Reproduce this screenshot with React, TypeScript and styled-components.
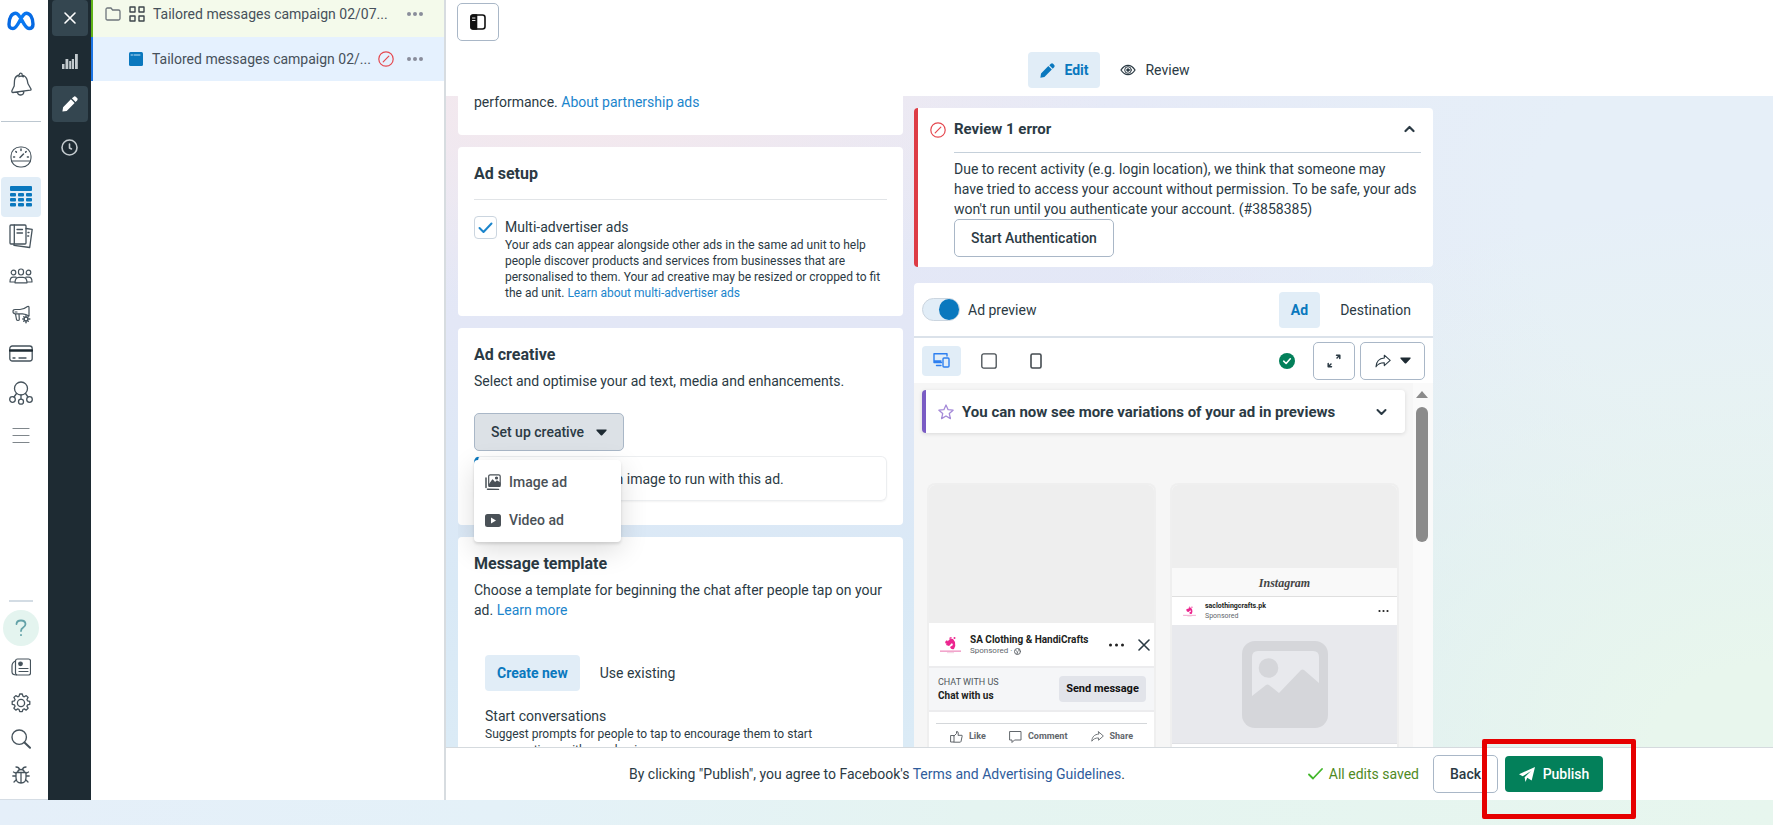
import React from 'react';
import styled, { createGlobalStyle, css } from 'styled-components';

const ink = '#2b3a44';
const blue = '#0a78be';
const line = '#cbd5df';

const Global = createGlobalStyle`
  *, *::before, *::after { box-sizing: border-box; }
  body { margin: 0; background: linear-gradient(to right, #e5eff9 0%, #e4f1f8 28%, #e5f4f1 55%, #e7f6ee 100%); }
  body, button, input { font-family: Roboto, "Noto Sans", sans-serif; font-size: 14px; line-height: 20px; color: ${ink}; }
  button { padding: 0; border: 0; background: none; cursor: pointer; }
  h2, h3, p, ul { margin: 0; padding: 0; }
  a { text-decoration: none; }
  svg { display: block; flex: none; }
`;

const Page = styled.div`
  height: 100vh;
  padding-bottom: 25px;
  display: flex;
  overflow: hidden;
`;

/* Left rail */
const Rail = styled.nav`
  width: 48px;
  flex: none;
  display: flex;
  flex-direction: column;
  background: #fff;
  padding: 0 7px 6px 1px;
  border-bottom: 1px solid #d5dde5;
`;
const RailTop = styled.div`
  display: flex;
  flex-direction: column;
  gap: 20px;
`;
const RailItem = styled.a<{ $h?: number; $active?: boolean }>`
  height: ${p => p.$h ?? 39}px;
  flex: none;
  display: flex;
  align-items: center;
  justify-content: center;
  border-radius: 4px;
  color: ${p => (p.$active ? blue : '#46535c')};
  background: ${p => (p.$active ? '#e1edf7' : 'transparent')};
`;
const RailRule = styled.hr`
  width: 100%;
  flex: none;
  height: 1px;
  border: 0;
  margin: 15px 0;
  background: #bcc7d0;
`;
const ShortRule = styled(RailRule)`
  width: 24px;
  height: 2px;
  margin: auto auto 8px;
  background: #d3dce4;
`;
const Help = styled.a`
  width: 36px;
  height: 36px;
  flex: none;
  margin: 0 auto 3px;
  border-radius: 50%;
  background: #e4f4ef;
  color: #64a2a8;
  display: flex;
  align-items: center;
  justify-content: center;
`;

/* Dark tool strip */
const Strip = styled.div`
  width: 43px;
  flex: none;
  background: #1e2b33;
  display: flex;
  flex-direction: column;
  align-items: center;
  gap: 7px;
`;
const StripButton = styled.button<{ $on?: boolean }>`
  width: 36px;
  height: 36px;
  flex: none;
  display: grid;
  place-items: center;
  border-radius: 4px;
  color: ${p => (p.$on ? '#fff' : '#c3cace')};
  background: ${p => (p.$on ? '#344650' : 'transparent')};
`;

/* Campaign tree */
const Tree = styled.aside`
  width: 355px;
  flex: none;
  background: #fff;
  border-right: 2px solid #d7dce0;
`;
const TreeRow = styled.div<{ $tone: 'green' | 'blue' }>`
  display: flex;
  align-items: center;
  gap: 8px;
  padding: 0 21px 0 12px;
  border-left: 2px solid ${p => (p.$tone === 'green' ? '#5fb319' : '#1b74e4')};
  background: ${p => (p.$tone === 'green' ? '#f4faeb' : '#e5f1fe')};
  ${p => (p.$tone === 'green'
    ? css`height: 37px; padding-bottom: 10px;`
    : css`height: 44px; padding-left: 35px;`)}
`;
const TreeName = styled.span`
  flex: 1;
  min-width: 0;
  white-space: nowrap;
  color: #46505a;
`;
const TreeStatus = styled.span`
  margin-right: 5px;
  color: #e5484f;
`;
const IconButton = styled.button`
  display: grid;
  place-items: center;
`;

/* Editor */
const Main = styled.main`
  flex: 1;
  min-width: 0;
  display: flex;
  flex-direction: column;
`;
const Header = styled.header`
  height: 96px;
  flex: none;
  background: #fff;
  padding: 3px 0 0 11px;
`;
const OutlineButton = styled.button<{ $w?: number }>`
  height: 38px;
  ${p => (p.$w ? `width: ${p.$w}px;` : 'padding: 0 16px;')}
  display: inline-flex;
  align-items: center;
  justify-content: center;
  gap: 9px;
  border: 1px solid #a9b7c7;
  border-radius: 5px;
  background: #fff;
  font-weight: 500;
`;
const Tabs = styled.div`
  display: flex;
  align-items: center;
  gap: 8px;
`;
const HeaderTabs = styled(Tabs)`
  justify-content: center;
  margin-top: 11px;
`;
const Tab = styled.button<{ $on?: boolean }>`
  height: 36px;
  padding: 0 12px;
  display: flex;
  align-items: center;
  gap: 9px;
  border-radius: 4px;
  ${p => p.$on && css`background: #e1edf7; color: ${blue}; font-weight: 700;`}
`;
const Body = styled.div`
  flex: 1;
  min-height: 0;
  overflow: hidden;
  padding-left: 12px;
  display: grid;
  grid-template-columns: minmax(0, 445px) minmax(0, 519px);
  grid-template-rows: minmax(0, 1fr);
  gap: 11px;
  background:
    radial-gradient(ellipse 40% 32% at 10% 0%, #f6e8ec 0%, rgba(246, 232, 236, 0) 100%),
    radial-gradient(ellipse 60% 85% at 100% 100%, #e8f6ed 15%, rgba(232, 246, 237, 0) 100%),
    radial-gradient(ellipse 45% 90% at 95% 20%, #e6eff8 30%, rgba(230, 239, 248, 0) 100%),
    linear-gradient(to bottom, #e6eaf7 0%, #e3e7f6 35%, #d9e9f6 75%, #dbebf6 100%);
`;
const Form = styled.div`
  overflow: hidden;
`;
const FormScroll = styled.div`
  margin-top: -20px;
  display: flex;
  flex-direction: column;
  gap: 12px;
`;
const Card = styled.section<{ $bottom?: number }>`
  background: #fff;
  border-radius: 4px;
  padding: 16px 16px ${p => p.$bottom ?? 16}px;
`;
const Title = styled.h2`
  font-size: 16px;
  line-height: 22px;
  font-weight: 700;
`;
const Text = styled.p`
  margin-top: 5px;
`;
const Small = styled.p`
  font-size: 12px;
  line-height: 16px;
`;
const Link = styled.a<{ $dark?: boolean }>`
  color: ${p => (p.$dark ? '#2f5c9c' : '#1b85cc')};
`;
const Rule = styled.hr<{ $dark?: boolean }>`
  border: 0;
  height: 1px;
  margin: 0;
  background: ${p => (p.$dark ? '#c5d0da' : '#e1e4e7')};
`;
const CardRule = styled(Rule)`
  margin: 14px 0 16px;
`;
const CheckRow = styled.div`
  display: flex;
  gap: 8px;
`;
const CheckWrap = styled.span`
  position: relative;
  width: 23px;
  height: 23px;
  flex: none;
  color: #1b85cc;
  svg { position: absolute; inset: 0; pointer-events: none; }
`;
const Check = styled.input`
  appearance: none;
  width: 23px;
  height: 23px;
  margin: 0;
  border: 1px solid ${line};
  border-radius: 4px;
  background: #fff;
`;
const CheckText = styled.div`
  padding-top: 1px;
`;
const Picker = styled.div`
  position: relative;
  display: inline-block;
  vertical-align: top;
  margin: 22px 0 5px;
`;
const PickerButton = styled(OutlineButton)`
  background: #dce1e6;
  gap: 12px;
`;
const Menu = styled.ul`
  position: absolute;
  z-index: 2;
  top: 47px;
  left: 0;
  width: 147px;
  padding: 3px 0;
  list-style: none;
  background: #fff;
  border-radius: 4px;
  box-shadow: 0 2px 3px rgba(0, 0, 0, 0.12), 0 8px 28px rgba(0, 0, 0, 0.14);
`;
const MenuItem = styled.button`
  width: 100%;
  height: 38px;
  padding-left: 11px;
  display: flex;
  align-items: center;
  gap: 8px;
  color: #4a5157;
  font-weight: 500;
`;
const Tip = styled.div`
  height: 45px;
  display: flex;
  align-items: center;
  padding-left: 130px;
  border: 1px solid #eceef0;
  border-left: 4px solid ${blue};
  border-radius: 6px;
  box-shadow: 0 1px 2px rgba(0, 0, 0, 0.05);
`;
const Inset = styled.div`
  margin-top: 35px;
  padding-left: 11px;
`;
const Subhead = styled.h3`
  font-size: 14px;
  line-height: 20px;
  font-weight: 400;
  margin-top: 15px;
`;

/* Right column */
const Side = styled.div`
  min-height: 0;
  padding-top: 12px;
  display: flex;
  flex-direction: column;
  gap: 16px;
`;
const ErrorCard = styled.section`
  flex: none;
  padding: 10px 12px;
  background: #fff;
  border-left: 4px solid #dd3c45;
  border-radius: 4px;
  display: grid;
  grid-template-columns: 16px minmax(0, 1fr);
  column-gap: 8px;
`;
const ErrorHead = styled.div`
  display: flex;
  align-items: center;
  justify-content: space-between;
  padding-right: 6px;
  height: 22px;
  margin-bottom: 12px;
`;
const Strong = styled.h2`
  font-size: 15px;
  line-height: 20px;
  font-weight: 700;
  white-space: nowrap;
`;
const ErrorIcon = styled.span`
  padding-top: 4px;
  color: #e5484f;
`;
const ErrorText = styled.p`
  margin-top: 6px;
`;
const Preview = styled.section`
  flex: 1;
  min-height: 0;
  display: flex;
  flex-direction: column;
  overflow: hidden;
  border-radius: 4px 4px 0 0;
  background: #fff;
`;
const Bar = styled.div<{ $h: number; $rule?: boolean }>`
  height: ${p => p.$h}px;
  flex: none;
  display: flex;
  align-items: center;
  justify-content: space-between;
  padding: 0 8px;
  ${p => p.$rule && css`padding-right: 10px; border-bottom: 2px solid #dbe2ea;`}
`;
const Group = styled.div<{ $gap: number }>`
  display: flex;
  align-items: center;
  gap: ${p => p.$gap}px;
`;
const Switch = styled.input`
  appearance: none;
  width: 38px;
  height: 23px;
  margin: 0;
  border: 1px solid ${line};
  border-radius: 12px;
  background: #e1edf7;
  &::before {
    content: '';
    display: block;
    width: 20px;
    height: 21px;
    margin-left: 16px;
    border-radius: 50%;
    background: ${blue};
  }
`;
const Device = styled.button<{ $on?: boolean }>`
  width: 39px;
  height: 30px;
  display: grid;
  place-items: center;
  border-radius: 4px;
  color: ${p => (p.$on ? '#2d7ff0' : '#444b50')};
  background: ${p => (p.$on ? '#e1edf7' : 'transparent')};
`;
const Stage = styled.div`
  flex: 1;
  min-height: 0;
  display: flex;
  background: #f6f6f6;
`;
const StageBody = styled.div`
  flex: 1;
  min-width: 0;
  display: flex;
  flex-direction: column;
  padding: 7px 8px 0;
`;
const Banner = styled.div`
  height: 43px;
  flex: none;
  padding: 0 18px 0 12px;
  display: flex;
  align-items: center;
  gap: 8px;
  background: #fff;
  border-left: 4px solid #7a5cc4;
  border-radius: 4px;
  box-shadow: 0 1px 4px rgba(0, 0, 0, 0.12);
  ${Strong} { flex: 1; }
`;
const Phones = styled.div`
  flex: 1;
  min-height: 0;
  margin: 50px 6px 0 5px;
  display: grid;
  grid-template-columns: 1fr 1fr;
  gap: 14px;
  overflow: hidden;
`;
const Phone = styled.article`
  display: flex;
  flex-direction: column;
  min-width: 0;
  border: 2px solid #efefef;
  border-bottom: 0;
  border-radius: 8px 8px 0 0;
  background: #fff;
  overflow: hidden;
  color: #1c1e21;
`;
const Blank = styled.div<{ $h: number }>`
  height: ${p => p.$h}px;
  flex: none;
  background: #eee;
`;
const PostHead = styled.div<{ $h: number }>`
  height: ${p => p.$h}px;
  flex: none;
  display: flex;
  align-items: center;
  gap: 9px;
  padding: 0 1px 0 11px;
`;
const PostName = styled.div<{ $s: number }>`
  flex: 1;
  min-width: 0;
  white-space: nowrap;
  font-size: ${p => p.$s}px;
  line-height: ${p => p.$s + 3}px;
  font-weight: 700;
  small {
    display: flex;
    align-items: center;
    gap: 2px;
    font-size: ${p => (p.$s > 8 ? 8 : 7)}px;
    line-height: 10px;
    font-weight: 400;
    color: #62676c;
  }
`;
const Cta = styled.div`
  height: 46px;
  flex: none;
  display: flex;
  align-items: center;
  justify-content: space-between;
  padding: 0 8px 0 9px;
  background: #f5f6f8;
  border: solid #ececee;
  border-width: 2px 0;
`;
const CtaText = styled.div`
  font-size: 10px;
  line-height: 13px;
  font-weight: 700;
  small { display: block; font-size: 9px; font-weight: 400; color: #50565b; }
`;
const CtaButton = styled.button`
  width: 87px;
  height: 26px;
  border-radius: 4px;
  background: #e2e4ea;
  color: #111;
  font-size: 11px;
  line-height: 14px;
  font-weight: 700;
`;
const Actions = styled.div`
  margin: 11px 7px 0;
  padding: 5px 14px 0;
  border-top: 1px solid #d4d7da;
  display: flex;
  justify-content: space-between;
`;
const Action = styled.button`
  display: flex;
  align-items: center;
  gap: 6px;
  font-size: 9px;
  line-height: 14px;
  font-weight: 700;
  color: #62676c;
`;
const InstaHead = styled.div`
  height: 29px;
  flex: none;
  background: #f9f9f9;
  border-bottom: 1px solid #dfdfdf;
  text-align: center;
  font: italic bold 12px/30px "Liberation Serif", serif;
  color: #444;
`;
const Media = styled.div`
  height: 119px;
  flex: none;
  background: #e8e9ed;
  display: flex;
  justify-content: center;
  padding-top: 16px;
  border-bottom: 1px solid #dfe0e4;
`;
const Scroll = styled.div`
  width: 20px;
  flex: none;
  padding: 8px 4px 0 3px;
  background: #fafafa;
`;
const Thumb = styled.div`
  width: 12px;
  height: 135px;
  margin-top: 9px;
  border-radius: 6px;
  background: #8b8b8b;
`;

/* Footer */
const Footer = styled.footer`
  height: 53px;
  flex: none;
  display: flex;
  align-items: center;
  justify-content: space-between;
  padding: 0 170px 0 183px;
  background: #fff;
  border-top: 1px solid #d5dade;
  white-space: nowrap;
`;
const Saved = styled.span`
  display: flex;
  align-items: center;
  gap: 6px;
  margin-right: 7px;
  color: #4f8a1f;
`;
const PublishWrap = styled.div`
  position: relative;
`;
const Publish = styled.button`
  height: 36px;
  width: 98px;
  display: flex;
  align-items: center;
  justify-content: center;
  gap: 8px;
  border-radius: 4px;
  background: #03805a;
  color: #fff;
  font-weight: 500;
`;
const Marker = styled.span`
  position: absolute;
  z-index: 3;
  inset: -17px -33px -27px -23px;
  border: 5px solid #e60000;
  border-radius: 2px;
  pointer-events: none;
`;

/* Icons */
type IconProps = { w?: number; h?: number; vb?: string; sw?: number; fill?: string; children: React.ReactNode };
const Icon = ({ w = 16, h, vb, sw = 1.2, fill = 'none', children }: IconProps) => (
  <svg width={w} height={h ?? w} viewBox={vb ?? `0 0 ${w} ${h ?? w}`} fill={fill} stroke={sw ? 'currentColor' : 'none'}
    strokeWidth={sw} strokeLinecap="round" strokeLinejoin="round" aria-hidden="true">{children}</svg>
);
const Dots = ({ w = 16, r = 2, c = '#8a8d9b' }) => (
  <Icon w={w} h={6} sw={0}><g fill={c}><circle cx={r} cy="3" r={r} /><circle cx={w / 2} cy="3" r={r} /><circle cx={w - r} cy="3" r={r} /></g></Icon>
);
const Pencil = ({ w = 16 }) => (
  <Icon w={w} vb="0 0 16 16" sw={0}><path fill="currentColor" d="M.4 15.600 1.100 11.200 8.900 3.300l3.700 3.700L4.700 14.900zM9.900 2.300 11.600.9a1.800 1.800 0 0 1 2.400 0l1.100 1.100a1.800 1.800 0 0 1 0 2.400L13.600 6z" /></Icon>
);
const Banned = () => (
  <Icon w={16}><circle cx="8" cy="8" r="7.2" /><path d="m5.2 10.8 5.6-5.6" /></Icon>
);
const Caret = () => <Icon w={11} h={7} sw={0}><path fill="#1e2b33" d="M.6.6h9.8q.5.6 0 1.1L6.2 6.2q-.7.6-1.4 0L.6 1.7Q.1 1 .6.6" /></Icon>;
const Arrow = ({ w = 16 }) => (
  <Icon w={w} vb="0 0 16 16" sw={1.1}><path d="M9.3 2.2 15.2 7.4 9.3 12.6V9.8C5.4 9.7 3 11 1 13.8 1.3 8.600 4 5.400 9.300 5z" /></Icon>
);
const Brand = ({ w = 21 }) => (
  <Icon w={w} vb="0 0 21 18" h={Math.round(w * 18 / 21)} sw={0}>
    <path fill="#ec268f" d="M8 5q2-3 5-2l2 3q1 4-1 7-3 1-4-2l3-2-1-2-3 3-3-1zM5 6l2-2 1 2-2 2zM9 2l2-1 1 1-2 1z" />
    <circle cx="14.5" cy="2" r="1" fill="#ec268f" /><rect y="14.5" width="21" height="1.3" fill="#ef8fc0" /><rect x="7" y="16.5" width="7" height=".6" fill="#e9b8cf" />
  </Icon>
);
const Meta = () => (
  <svg width="28" height="20" viewBox="0 0 28 20" fill="none" aria-hidden="true">
    <defs><linearGradient id="meta" x1="0" x2="1"><stop stopColor="#0668e1" /><stop offset=".5" stopColor="#0a7cf5" /><stop offset="1" stopColor="#0668e1" /></linearGradient></defs>
    <path stroke="url(#meta)" strokeWidth="3.4" d="M2 13.2C2 6.5 5 2.2 8.7 2.2c5.3 0 7.6 15.3 13.3 15.3 2.8 0 4-1.8 4-4.3C26 6.500 22.900 2.200 19.200 2.200 14 2.200 11.500 17.500 6 17.500c-2.800 0-4-1.800-4-4.300z" />
  </svg>
);

export default function App() {
  return (
    <>
      <Global />
      <Page>
        <Rail aria-label="Meta tools">
          <RailTop>
            <RailItem $h={42} href="#home" aria-label="Meta"><Meta /></RailItem>
            <RailItem $h={44} href="#notifications" aria-label="Notifications">
              <Icon w={22} h={24} sw={1.3}><path d="M2 18.500 4.200 14l.3-5.500Q5 4 9.200 3q.3-2 1.700-1.900t1.300 2q4 1 5 5l.8 3.700 3 5.200q.3 1-.8 1.200L3 20.500Q1.400 20.300 2 18.500zM7.500 20.200q.3 3 3.400 2.800 2.800-.3 3-3.500M8.800 4.800Q11 3.600 13.400 4.800" /></Icon>
            </RailItem>
          </RailTop>
          <RailRule />
          <RailItem $h={40} href="#overview" aria-label="Account overview">
            <Icon w={22} sw={1.1}><rect x="1" y="1" width="20" height="20" rx="9" /><path d="M1.600 15h18.800" /><path d="M10 11.500 13.500 8M11 3v1.500M5.800 5.500l.6.600M16.200 5.500l-.6.600M3.600 11h1M17.400 11h1" strokeWidth="1.5" /></Icon>
          </RailItem>
          <RailItem $h={40} $active href="#campaigns" aria-label="Campaigns">
            <Icon w={22} sw={0}><g fill="currentColor"><rect width="22" height="5" rx="1" />{[7, 12, 17].map(y => [0, 8, 16].map(x => <rect key={`${x}-${y}`} x={x} y={y} width="6" height="3.4" rx="1" />))}</g></Icon>
          </RailItem>
          <RailItem href="#reporting" aria-label="Ads reporting">
            <Icon w={24} h={25} sw={1.3}><rect x="1" y="1" width="16" height="19" rx="1" /><path d="M5.300 1v19M8 5.500h5.500M8 9h5.500M17 4.500l6.200.8-2.500 18.200L5 21.400V20M19 8.500h1M18.700 12h1" /></Icon>
          </RailItem>
          <RailItem href="#audiences" aria-label="Audiences">
            <Icon w={24} h={16} sw={1.2}><rect x="9.5" y="1" width="5" height="6" rx="2.4" /><circle cx="4.5" cy="4.5" r="2.3" /><circle cx="19.5" cy="4.5" r="2.3" /><path d="M6 14.800c0-3.500 1.500-5.500 4-5.500h4c2.500 0 4 2 4 5.500zM6 14H1c0-3 1-4.800 3.200-4.800H7M18 14h5c0-3-1-4.800-3.200-4.800H17" /></Icon>
          </RailItem>
          <RailItem href="#ads-settings" aria-label="Advertising settings">
            <Icon w={19} h={19} sw={1.2}><path d="M3 4.500h5Q12 4.300 15.500 1.500 17 1 17 2.500V11q-3-2-6.500-2.200H3Q1 8.700 1 6.600T3 4.500zM3.500 9l1 5.500q.3 1 1.500 1t1.300-1L7 9M3 7h2" /><circle cx="14" cy="14" r="1.8" /><path d="M14 10.700v1M14 16.300v1.500M10.800 14h1M16.300 14h1.500M11.800 11.800l.7.700M16.200 11.800l-.7.700M11.800 16.200l.7-.7M16.200 16.200l-.7-.7" strokeWidth="1.5" /></Icon>
          </RailItem>
          <RailItem href="#billing" aria-label="Billing">
            <Icon w={24} h={17} sw={1.3}><rect x=".8" y="1" width="22.4" height="15" rx="2.5" /><path d="M1 5.500h22" strokeWidth="2.4" stroke="#1e2b33" /><path d="M4 13h2M10 13h7" /></Icon>
          </RailItem>
          <RailItem href="#events" aria-label="Events manager">
            <Icon w={24} h={24} sw={1.3}><circle cx="12" cy="7.5" r="6.5" /><circle cx="3.5" cy="18.5" r="2.8" /><circle cx="12" cy="20.7" r="2.5" /><circle cx="20.5" cy="18.5" r="2.8" /><path d="M12 14v4M7.500 12.500 5 16M16.500 12.500 19 16" /></Icon>
          </RailItem>
          <RailItem $h={47} href="#all-tools" aria-label="All tools">
            <Icon w={18} h={17} sw={1.2}><path d="M1 1.500h16M1 8.500h16M1 15.500h16" stroke="#7f868b" /></Icon>
          </RailItem>
          <ShortRule />
          <Help href="#help" aria-label="Help"><Icon w={12} h={18} sw={1.8}><path d="M1.500 5Q1.700 1.500 6 1.500T10.500 5q0 2-2.300 3.400Q6 9.700 6 12M6 15.800v.4" /></Icon></Help>
          <RailItem $h={36} href="#news" aria-label="News">
            <Icon w={20} h={18} sw={1.2}><rect x="4.5" y="1" width="15" height="16" rx="2" /><path d="M4.500 3Q1 4.500 1 8v6q0 3 4.500 3" /><circle cx="9.5" cy="5.8" r="1.8" fill="currentColor" /><path d="M8 10.500h9M8 13.500h9" /></Icon>
          </RailItem>
          <RailItem $h={36} href="#settings" aria-label="Settings">
            <Icon w={20} sw={1.3}><circle cx="10" cy="10" r="3.6" /><path d="M8.700 1h2.600l.6 2.200 1.300.6 2-1.200 1.900 1.900-1.200 2 .6 1.300 2.300.6v2.900l-2.300.6-.6 1.300 1.200 2-1.900 1.900-2-1.200-1.300.6-.6 2.200H8.700l-.6-2.200-1.300-.6-2 1.200-1.900-1.900 1.200-2-.6-1.300L1.200 11.300V8.400l2.300-.6.6-1.300-1.200-2 1.900-1.900 2 1.200 1.300-.6z" /></Icon>
          </RailItem>
          <RailItem $h={36} href="#search" aria-label="Search">
            <Icon w={20} sw={1.4}><circle cx="8.2" cy="8.2" r="7.2" /><path d="m13.500 13.500 5.500 5.300" strokeWidth="2" /></Icon>
          </RailItem>
          <RailItem $h={36} href="#report" aria-label="Report a problem">
            <Icon w={18} sw={1.3}><path d="M4 6.500h10v5q0 5.500-5 5.500t-5-5.500zM9 6.500V17M5.500 6.300Q6 3.500 9 3.500t3.500 2.800M4 1q3 0 3.500 2.500M14 1q-3 0-3.500 2.500M4 10H.8M14 10h3.200M4.200 7.500 1.500 6M13.800 7.500 16.500 6M4.500 13.500 2 16M13.500 13.500 16 16" /></Icon>
          </RailItem>
        </Rail>

        <Strip>
          <StripButton $on aria-label="Close"><Icon w={14} sw={1.6}><path d="m2 2 10 10M12 2 2 12" /></Icon></StripButton>
          <StripButton aria-label="Charts"><Icon w={16} h={15} sw={0}><g fill="currentColor"><rect y="10" width="2.5" height="5" /><rect x="3.5" y="5" width="2.8" height="10" /><rect x="7.2" y="7" width="2" height="8" /><rect x="9.8" y="5" width="2.2" height="10" /><rect x="13" width="2.8" height="15" /></g></Icon></StripButton>
          <StripButton $on aria-label="Edit"><Pencil /></StripButton>
          <StripButton aria-label="History"><Icon w={17} sw={1.6}><circle cx="8.5" cy="8.5" r="7.5" /><path d="M8.500 5v4l2 1" /></Icon></StripButton>
        </Strip>

        <Tree aria-label="Campaign structure">
          <TreeRow $tone="green">
            <Icon w={16} h={14} sw={1.3}><path d="M1 11.500v-9Q1 1 2.500 1H6l1.600 2H13.500Q15 3 15 4.500v7Q15 13 13.500 13h-11Q1 13 1 11.500z" stroke="#6d757b" /></Icon>
            <Icon w={16} sw={1.4}><path d="M1 1h5v5H1zM10 1h5v5h-5zM1 10h5v5H1zM10 10h5v5h-5z" stroke="#3d464c" /></Icon>
            <TreeName>Tailored messages campaign 02/07...</TreeName>
            <IconButton aria-label="More options"><Dots /></IconButton>
          </TreeRow>
          <TreeRow $tone="blue">
            <Icon w={16} h={16} sw={0}><rect x="1" y="1" width="14" height="14" rx="1.5" fill={blue} /><path d="M3 4h1.500M6 4h6" stroke="#bfe0f4" strokeWidth="1" /></Icon>
            <TreeName>Tailored messages campaign 02/...</TreeName>
            <TreeStatus><Banned /></TreeStatus>
            <IconButton aria-label="More options"><Dots /></IconButton>
          </TreeRow>
        </Tree>

        <Main>
          <Header>
            <OutlineButton $w={42} aria-label="Toggle panel">
              <Icon w={16} sw={1.6}><rect x="1" y="1" width="14" height="14" rx="2.5" stroke="#111" /><path d="M3 1h3.500v14H3q-2 0-2-2V3q0-2 2-2z" fill="#111" stroke="#111" /><path d="M2.500 4h2.500M2.500 6.500h2.500" stroke="#fff" strokeWidth=".9" /></Icon>
            </OutlineButton>
            <HeaderTabs>
              <Tab $on><Pencil w={15} />Edit</Tab>
              <Tab>
                <Icon w={16} h={12} sw={1.3}><path d="M1 6Q4 1.300 8 1.300T15 6Q12 10.700 8 10.700T1 6z" /><circle cx="8" cy="6" r="3.3" strokeWidth="1" /><circle cx="8" cy="6" r="1.5" fill="currentColor" strokeWidth=".5" /></Icon>
                Review
              </Tab>
            </HeaderTabs>
          </Header>

          <Body>
            <Form>
              <FormScroll>
                <Card $bottom={23}><p>performance. <Link href="#partnership">About partnership ads</Link></p></Card>
                <Card $bottom={15}>
                  <Title>Ad setup</Title>
                  <CardRule />
                  <CheckRow>
                    <CheckWrap>
                      <Check type="checkbox" id="multi" defaultChecked />
                      <Icon w={23} sw={2}><path d="m5.500 12 4 4 8-8.500" /></Icon>
                    </CheckWrap>
                    <CheckText>
                      <label htmlFor="multi">Multi-advertiser ads</label>
                      <Small>Your ads can appear alongside other ads in the same ad unit to help people discover products and services from businesses that are personalised to them. Your ad creative may be resized or cropped to fit the ad unit. <Link href="#multi-ads">Learn about multi-advertiser ads</Link></Small>
                    </CheckText>
                  </CheckRow>
                </Card>
                <Card $bottom={24}>
                  <Title>Ad creative</Title>
                  <Text>Select and optimise your ad text, media and enhancements.</Text>
                  <Picker>
                    <PickerButton aria-haspopup="menu" aria-expanded="true">Set up creative<Caret /></PickerButton>
                    <Menu>
                      <li><MenuItem>
                        <Icon w={16} sw={1.2}><rect x="3.7" y=".8" width="11.5" height="11.5" rx="1.5" /><path d="m4 11 3.500-5 2.500 3 2-2 3 2v3.300H4z" fill="currentColor" /><circle cx="11.5" cy="4" r="1" fill="currentColor" /><path d="M1 4v9.500M2.500 15.200l11 .2" strokeWidth="1.5" /></Icon>
                        Image ad
                      </MenuItem></li>
                      <li><MenuItem>
                        <Icon w={16} h={13} sw={0}><rect width="16" height="13" rx="2.5" fill="currentColor" /><path d="M6 3.500v6l5-3z" fill="#fff" /></Icon>
                        Video ad
                      </MenuItem></li>
                    </Menu>
                  </Picker>
                  <Tip>an image to run with this ad.</Tip>
                </Card>
                <Card>
                  <Title>Message template</Title>
                  <Text>Choose a template for beginning the chat after people tap on your ad. <Link href="#learn">Learn more</Link></Text>
                  <Inset>
                    <Tabs><Tab $on>Create new</Tab><Tab>Use existing</Tab></Tabs>
                    <Subhead>Start conversations</Subhead>
                    <Small>Suggest prompts for people to tap to encourage them to start<br />conversations with your business.</Small>
                  </Inset>
                </Card>
              </FormScroll>
            </Form>

            <Side>
              <ErrorCard>
                <ErrorIcon><Banned /></ErrorIcon>
                <div>
                  <ErrorHead>
                    <Strong>Review 1 error</Strong>
                    <IconButton aria-label="Collapse"><Icon w={11} h={8} sw={2.2}><path d="m1.500 6 4-4 4 4" /></Icon></IconButton>
                  </ErrorHead>
                  <Rule $dark />
                  <ErrorText>Due to recent activity (e.g. login location), we think that someone may<br />have tried to access your account without permission. To be safe, your ads won't run until you authenticate your account. (#3858385)</ErrorText>
                  <OutlineButton>Start Authentication</OutlineButton>
                </div>
              </ErrorCard>

              <Preview>
                <Bar $h={55} $rule>
                  <Group $gap={8}>
                    <Switch type="checkbox" role="switch" id="preview" defaultChecked />
                    <label htmlFor="preview">Ad preview</label>
                  </Group>
                  <Tabs><Tab $on>Ad</Tab><Tab>Destination</Tab></Tabs>
                </Bar>
                <Bar $h={45}>
                  <Group $gap={8}>
                    <Device $on aria-label="All devices"><Icon w={17} h={15} sw={1.4}><path d="M8.500 9.500H1v-8.700h13V3M1 9.500h7.500M3.500 12.500H8M1 8h7" /><rect x="10" y="5" width="6" height="9" rx="1" /></Icon></Device>
                    <Device aria-label="Tablet"><Icon w={16} sw={1.3}><rect x=".8" y=".8" width="14.4" height="14.4" rx="2" /></Icon></Device>
                    <Device aria-label="Mobile"><Icon w={12} h={16} sw={1.6}><rect x="1" y="1" width="10" height="14" rx="1.5" /></Icon></Device>
                  </Group>
                  <Group $gap={5}>
                    <Icon w={29} h={16} sw={0}><circle cx="8" cy="8" r="8" fill="#03805a" /><path d="m4.700 8.200 2.400 2.300 4.200-4.700" stroke="#fff" strokeWidth="1.6" /></Icon>
                    <OutlineButton $w={42} aria-label="Expand">
                      <Icon w={14} sw={1.5}><path d="M9.500 1.200h3.300V4.500M12.500 1.500 10 4M4.500 12.800H1.200v-3.300M1.500 12.500 4 10" /></Icon>
                    </OutlineButton>
                    <OutlineButton $w={65} aria-label="Share"><Arrow /><Caret /></OutlineButton>
                  </Group>
                </Bar>
                <Stage>
                  <StageBody>
                    <Banner>
                      <Icon w={16} sw={1.3}><path d="m8 1 2.100 4.700 5 .5-3.800 3.400 1.100 5L8 12l-4.400 2.600 1.100-5L.9 6.200l5-.5z" stroke="#a58ad8" /></Icon>
                      <Strong>You can now see more variations of your ad in previews</Strong>
                      <IconButton aria-label="Expand notice"><Icon w={11} h={8} sw={2}><path d="m1.500 2 4 4 4-4" /></Icon></IconButton>
                    </Banner>
                    <Phones>
                      <Phone>
                        <Blank $h={138} />
                        <PostHead $h={43}>
                          <Brand />
                          <PostName $s={10}>SA Clothing &amp; HandiCrafts
                            <small>Sponsored · <Icon w={7} sw={1}><circle cx="3.5" cy="3.5" r="3" /><path d="M2 2.500 3.500 4 3 6M5 1v2" /></Icon></small>
                          </PostName>
                          <IconButton aria-label="Post options"><Dots w={15} r={1.5} c="#222" /></IconButton>
                          <IconButton aria-label="Hide post"><Icon w={20} h={12} sw={1.6}><path d="m6 1 10 10M16 1 6 11" /></Icon></IconButton>
                        </PostHead>
                        <Cta>
                          <CtaText><small>CHAT WITH US</small>Chat with us</CtaText>
                          <CtaButton>Send message</CtaButton>
                        </Cta>
                        <Actions>
                          <Action><Icon w={13} sw={1}><path d="M1 5.500h3v6.500H1zM4 6l2.500-2.500V1.500Q8.500 1 8.300 4L8 5.300h4q.6.700 0 1.500L11 11.500q-.3.700-1 .7H4" /></Icon>Like</Action>
                          <Action><Icon w={13} sw={1}><path d="M1 1.500h11v8.500H5.500L3 12.500V10H1z" /></Icon>Comment</Action>
                          <Action><Arrow w={13} />Share</Action>
                        </Actions>
                      </Phone>
                      <Phone>
                        <Blank $h={83} />
                        <InstaHead>Instagram</InstaHead>
                        <PostHead $h={28}>
                          <Brand w={13} />
                          <PostName $s={7}>saclothingcrafts.pk<small>Sponsored</small></PostName>
                          <IconButton aria-label="Post options"><Icon w={18} h={6} sw={0}><g fill="#222"><circle cx="1.5" cy="3" r="1.1" /><circle cx="5.5" cy="3" r="1.1" /><circle cx="9.5" cy="3" r="1.1" /></g></Icon></IconButton>
                        </PostHead>
                        <Media>
                          <Icon w={86} h={87} sw={0}>
                            <rect width="86" height="87" rx="13" fill="#d5d6da" />
                            <path fill="#e8e9ed" d="M10 16q0-6 6-6h55q6 0 6 6v26L62 29q-1.500-1-3 0L37 52 27 44q-1.500-1-3 0L10 55z" />
                            <circle cx="26.5" cy="27" r="9.8" fill="#d5d6da" />
                          </Icon>
                        </Media>
                      </Phone>
                    </Phones>
                  </StageBody>
                  <Scroll><Icon w={12} h={7} sw={0}><path d="M6 0l6 7H0z" fill="#8b8b8b" /></Icon><Thumb /></Scroll>
                </Stage>
              </Preview>
            </Side>
          </Body>

          <Footer>
            <p>By clicking "Publish", you agree to Facebook's <Link $dark href="#terms">Terms and Advertising Guidelines</Link>.</p>
            <Group $gap={7}>
              <Saved><Icon w={15} h={12} sw={1.8}><path d="m1 6.500 4 4L14 1" stroke="#42b72a" /></Icon>All edits saved</Saved>
              <OutlineButton>Back</OutlineButton>
              <PublishWrap>
                <Publish><Icon w={16} h={15} sw={0}><path fill="#fff" d="M0 7.300 16 0l-3.300 13.500-4.500-2.700L6.500 15l-.9-4.700L12 4 3.700 9.300z" /></Icon>Publish</Publish>
                <Marker />
              </PublishWrap>
            </Group>
          </Footer>
        </Main>
      </Page>
    </>
  );
}
